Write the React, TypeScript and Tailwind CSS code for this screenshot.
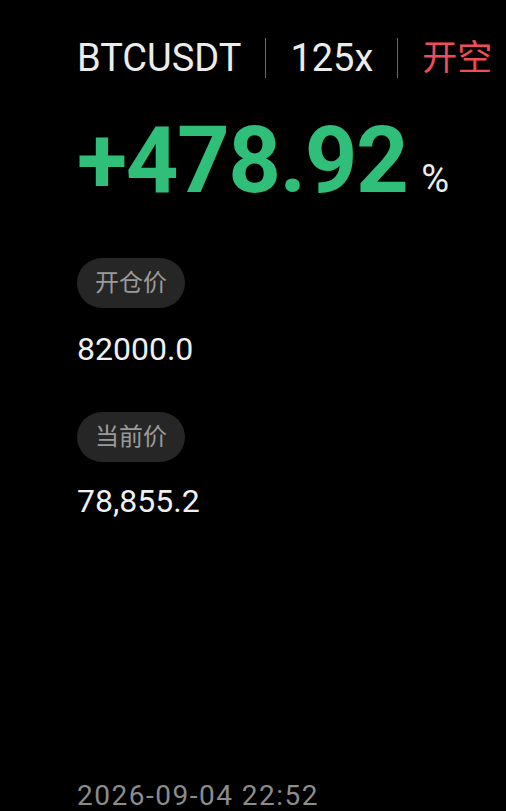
export default function App() {
  const font = { fontFamily: 'Roboto, "Noto Sans CJK SC", sans-serif' };
  return (
    <div className="w-[506px] h-[811px] overflow-hidden bg-black flex flex-col pl-[77px]" style={font}>
      <div className="mt-[39px] flex items-center h-[38px] text-[38px] leading-none text-[#ececec]">
        <span>BTCUSDT</span>
        <span className="mx-[24px] w-px h-[40px] bg-[#6a6a6a]" />
        <span>125x</span>
        <span className="mx-[24px] w-px h-[40px] bg-[#6a6a6a]" />
        <span className="text-[#ec4d59] text-[35px]">开空</span>
      </div>
      <div className="mt-[38px] flex items-baseline leading-none">
        <span className="text-[92px] font-bold text-[#2fbf78] tracking-[-1.5px]">+478.92</span>
        <span className="ml-[14px] text-[38px] text-[#ececec]">%</span>
      </div>
      <div className="mt-[51px] self-start h-[50px] px-[18px] rounded-full bg-[#262626] flex items-center text-[24px] text-[#9a9a9a] leading-none">
        开仓价
      </div>
      <div className="mt-[25px] text-[32px] leading-none text-[#f0f0f0]">82000.0</div>
      <div className="mt-[47px] self-start h-[50px] px-[18px] rounded-full bg-[#262626] flex items-center text-[24px] text-[#9a9a9a] leading-none">
        当前价
      </div>
      <div className="mt-[23px] text-[32px] leading-none text-[#f0f0f0]">78,855.2</div>
      <div className="mt-[265px] text-[28px] leading-none tracking-[1.5px] text-[#8c8c8c]">2026-09-04 22:52</div>
    </div>
  );
}
